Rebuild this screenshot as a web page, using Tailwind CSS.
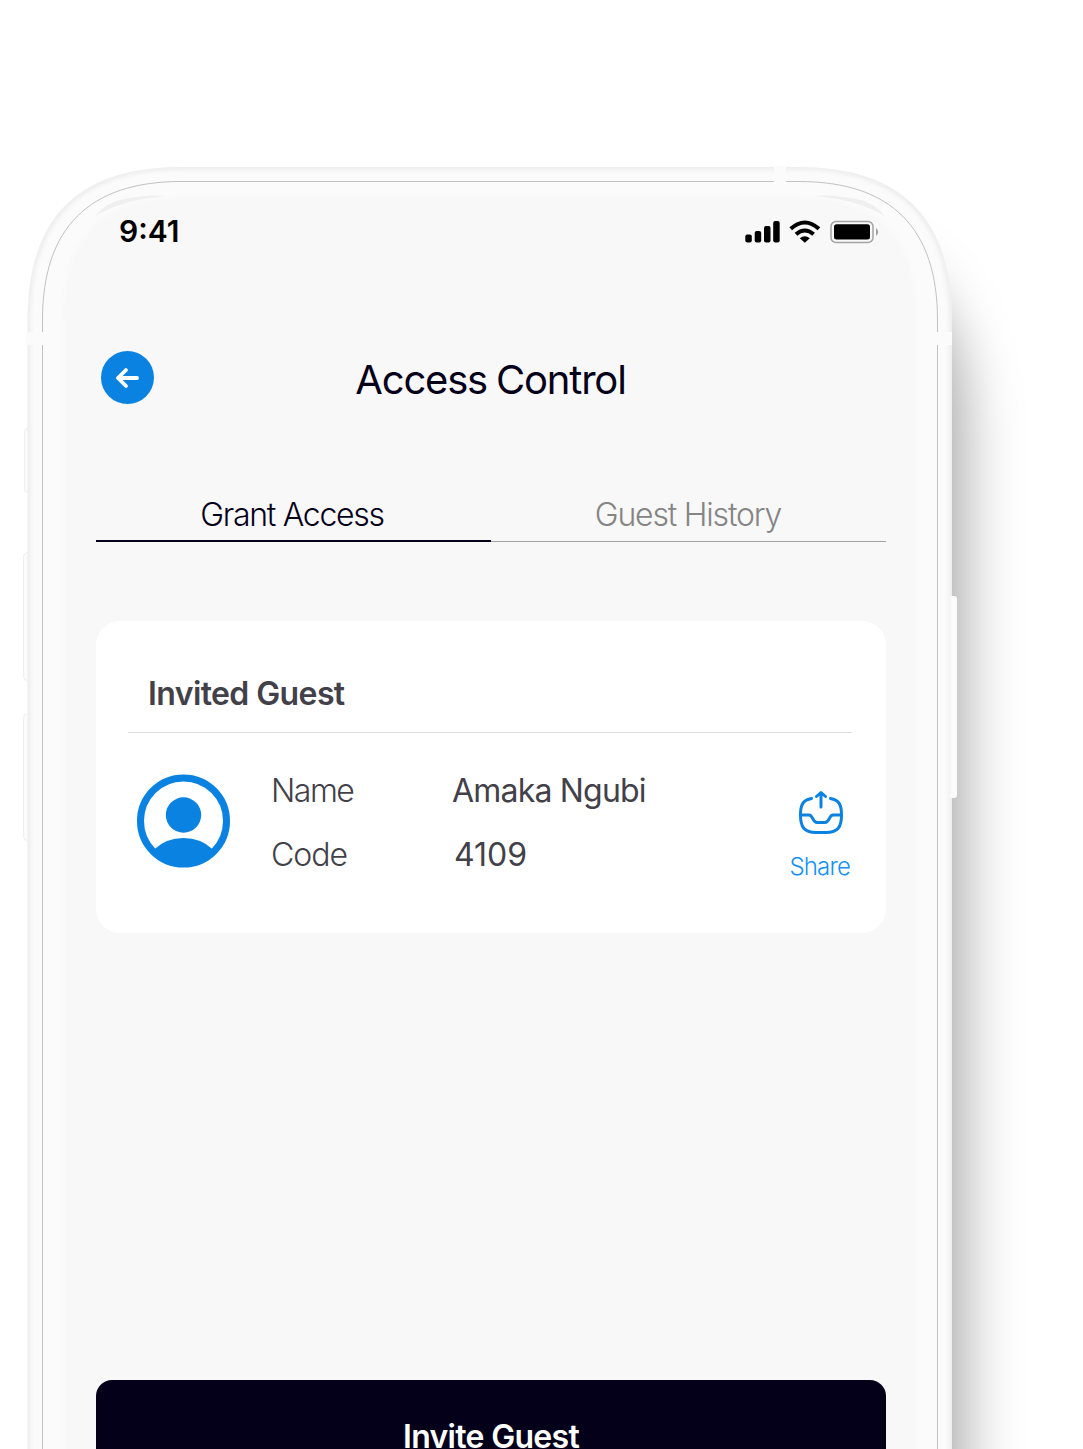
<!DOCTYPE html>
<html lang="en">
<head>
<meta charset="utf-8">
<title>Access Control</title>
<script src="https://cdn.jsdelivr.net/npm/@tailwindcss/browser@4"></script>
</head>
<body class="bg-white">
<div class="relative w-[1083px] h-[1449px] overflow-hidden bg-white font-['Inter',sans-serif]">
  <!-- Device frame -->
  <svg class="absolute inset-0" width="1083" height="1449" viewBox="0 0 1083 1449" fill="none" aria-hidden="true">
    <defs>
      <filter id="soft" x="-20%" y="-20%" width="140%" height="140%"><feGaussianBlur stdDeviation="29"/></filter>
      <filter id="b3" x="-5%" y="-5%" width="110%" height="110%"><feGaussianBlur stdDeviation="2.5"/></filter>
      <path id="outer" d="M27.500 1600V320C27.500 218 78 167 180 167H799C901 167 952 218 952 320V1600Z"/>
      <clipPath id="oc"><use href="#outer"/></clipPath>
    </defs>
    <path d="M140 1650V440C140 320 210 250 330 250H800C910 250 962 310 962 430V1650Z" fill="#000" fill-opacity=".36" filter="url(#soft)"/>
    <g fill="#fbfbfb" stroke="#efefef">
      <rect x="24.500" y="428.500" width="8" height="64" rx="3"/>
      <rect x="23.500" y="552.500" width="9" height="128" rx="4"/>
      <rect x="23.500" y="713.500" width="9" height="127" rx="4"/>
    </g>
    <use href="#outer" fill="#fbfbfb"/>
    <g clip-path="url(#oc)"><use href="#outer" stroke="#e6e6e6" stroke-width="4" filter="url(#b3)"/></g>
    <rect x="949.500" y="596" width="7.500" height="202" rx="3" fill="#fbfbfb"/>
    <path d="M950 599V795" stroke="#f0f0f0"/>
    <path d="M42.500 1600V320C42.500 228 89 181.500 181 181.500H799C891 181.500 937.500 228 937.500 320V1600Z" fill="#fbfbfb" stroke="#c2c2c2"/>
    <path d="M63 1600V320C63 238 98 196 190 196H790C882 196 917 238 917 320V1600Z" fill="#f8f8f8" filter="url(#b3)"/>
    <path d="M94 217Q108 201 124 199Q150 194 165 196Q120 200 94 217Z" fill="#efefef"/>
    <path d="M886 217Q872 201 856 199Q830 194 815 196Q860 200 886 217Z" fill="#efefef"/>
    <g fill="#fbfbfb"><rect x="26" y="332" width="18" height="13"/><rect x="936" y="332" width="16" height="13"/><rect x="774" y="166" width="12" height="17"/></g>
  </svg>

  <main class="relative flex flex-col w-[790px] ml-24 pt-[211px]">
    <header class="flex items-center justify-between h-[42px] pl-[23px] pr-[6px] text-black">
      <span class="text-[30px] leading-none font-semibold pb-[2px]">9:41</span>
      <svg width="136" height="26" viewBox="744 219 136 26" fill="none">
        <g fill="#000"><rect x="745.300" y="234.500" width="6.500" height="8" rx="2"/><rect x="754.700" y="231" width="6.500" height="11.500" rx="2"/><rect x="764" y="226" width="6.500" height="16.500" rx="2"/><rect x="773.200" y="221" width="6.500" height="21.500" rx="2"/></g>
        <g stroke="#000" stroke-width="4"><path d="M790.700 228.800Q804.800 216.200 818.900 228.800"/><path d="M796 234.300Q804.800 226.700 813.600 234.300"/></g>
        <path d="M799.800 238.300Q804.800 234.300 809.800 238.300L804.800 242.800Z" fill="#000"/>
        <rect x="831" y="221.500" width="42" height="21" rx="5" stroke="#a3a3a3" stroke-width="1.500"/>
        <rect x="834" y="224.300" width="36" height="15.200" rx="2.500" fill="#000"/>
        <path d="M876 228Q880.500 232 876 236Z" fill="#a3a3a3"/>
      </svg>
    </header>

    <div class="relative flex items-center justify-center h-[54px] mt-[98px]">
      <button class="absolute left-[5px] top-0 grid place-items-center size-[53px] rounded-full bg-[#0a82e2]" aria-label="Back">
        <svg width="53" height="53" viewBox="101 351 53 53" fill="none" stroke="#fff" stroke-width="3.800" stroke-linecap="round" stroke-linejoin="round"><path d="M137 378H118M126 370L118 378L126 386"/></svg>
      </button>
      <h1 class="pt-1 pr-px text-[40px] leading-none tracking-[-1.2px] [word-spacing:-1px] text-[#05001a]">Access Control</h1>
    </div>

    <nav class="grid grid-cols-2 mt-[84px] h-[53px] text-[32px] leading-[51px] text-center">
      <div class="h-[53px] pr-[3px] border-b-2 border-[#05001a] text-[#05001a] font-light tracking-[-1.3px]">Grant Access</div>
      <div class="h-[53px] pr-px border-b border-[#a3a3a3] text-[#858585] font-light tracking-[-1.2px]">Guest History</div>
    </nav>

    <section class="flex flex-col mt-[79px] h-[312px] rounded-[24px] bg-white pl-8 pr-[34px] text-[#424149]">
      <h2 class="h-[112px] pt-[54px] pl-5 border-b border-[#dedede] text-[32px] leading-[38px] font-semibold tracking-[-0.6px]">Invited Guest</h2>
      <div class="flex pt-[37px] text-[32px]">
        <svg class="ml-[7px] mt-[3px]" width="96" height="96" viewBox="135 772.500 96 96" fill="none">
          <circle cx="183.500" cy="820.500" r="43" stroke="#0a82e2" stroke-width="7"/>
          <circle cx="183.500" cy="814.500" r="17.700" fill="#0a82e2"/>
          <path d="M154 849Q166 837.500 183.500 837.500Q201 837.500 213 849Q201 864 183.500 864Q166 864 154 849Z" fill="#0a82e2"/>
        </svg>
        <dl class="grid grid-cols-[181px_auto] ml-10 leading-[64px] -mt-[11px]">
          <dt class="font-light tracking-[-1.5px]">Name</dt><dd class="tracking-[-0.8px]">Amaka Ngubi</dd>
          <dt class="font-light tracking-[-1px]">Code</dt><dd class="pl-[2px]">4109</dd>
        </dl>
        <button class="flex flex-col items-center ml-auto mt-[19px] mr-[2px]">
          <svg width="48" height="48" viewBox="797 789 48 48" fill="none" stroke="#0a82e2" stroke-width="3" stroke-linecap="round" stroke-linejoin="round"><path d="M811.500 798.500C803 800 800.500 804.500 800.500 815C800.500 827 804 832.500 816 832.500H826C838 832.500 841.500 827 841.500 815C841.500 804.500 839 800 830.500 798.500"/><path d="M821 807V793M816.500 796.500L821 792.500L825.500 796.500"/><path d="M801 815H809C813 815 812.500 822.500 817 822.500H825C829.500 822.500 829 815 833 815H841"/></svg>
          <span class="-ml-[3px] text-[24px] leading-7 mt-4 font-light tracking-[-0.8px] text-[#1592f5]">Share</span>
        </button>
      </div>
    </section>

    <button class="mt-[447px] h-[114px] rounded-[16px] bg-[#05001a] text-white text-[32px] font-semibold tracking-[-0.7px]">Invite Guest</button>
  </main>
</div>
</body>
</html>
